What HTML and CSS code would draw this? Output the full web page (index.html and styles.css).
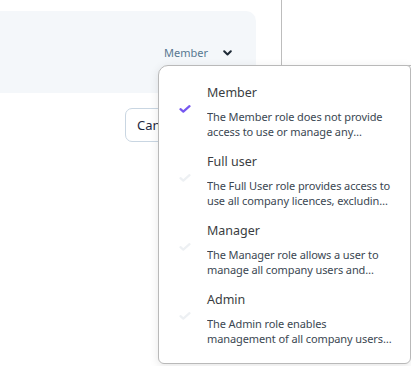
FILE: index.html
```html
<!DOCTYPE html>
<html>
<head>
<meta charset="utf-8">
<link rel="stylesheet" href="styles.css">
</head>
<body>
<div class="page">
  <div class="main">
    <div class="panel">
      <div class="role-select">
        <span class="role-value">Member</span>
        <svg class="chevron" width="9" height="6" viewBox="0 0 9 6"><path d="M1.2 1.2 L4.5 4.5 L7.8 1.2" fill="none" stroke="#1e2a36" stroke-width="2" stroke-linecap="round" stroke-linejoin="round"/></svg>
      </div>
    </div>
    <div class="actions">
      <button class="btn">Cancel</button>
      <button class="btn btn-primary">Save</button>
    </div>
  </div>
  <div class="side"></div>
</div>

<div class="menu">
  <div class="item">
    <svg class="check selected" width="12" height="8" viewBox="0 0 12 8"><path d="M1.5 4.2 L4.3 6.6 L10.5 1.2" fill="none" stroke="currentColor" stroke-width="2.2" stroke-linecap="round" stroke-linejoin="round"/></svg>
    <div class="item-body">
      <div class="item-title">Member</div>
      <div class="item-desc">The Member role does not provide access to use or manage any company licences or users.</div>
    </div>
  </div>
  <div class="item">
    <svg class="check" width="12" height="8" viewBox="0 0 12 8"><path d="M1.5 4.2 L4.3 6.6 L10.5 1.2" fill="none" stroke="currentColor" stroke-width="2.2" stroke-linecap="round" stroke-linejoin="round"/></svg>
    <div class="item-body">
      <div class="item-title">Full user</div>
      <div class="item-desc">The Full User role provides access to use all company licences, excluding administrative features.</div>
    </div>
  </div>
  <div class="item">
    <svg class="check" width="12" height="8" viewBox="0 0 12 8"><path d="M1.5 4.2 L4.3 6.6 L10.5 1.2" fill="none" stroke="currentColor" stroke-width="2.2" stroke-linecap="round" stroke-linejoin="round"/></svg>
    <div class="item-body">
      <div class="item-title">Manager</div>
      <div class="item-desc">The Manager role allows a user to manage all company users and licences.</div>
    </div>
  </div>
  <div class="item">
    <svg class="check" width="12" height="8" viewBox="0 0 12 8"><path d="M1.5 4.2 L4.3 6.6 L10.5 1.2" fill="none" stroke="currentColor" stroke-width="2.2" stroke-linecap="round" stroke-linejoin="round"/></svg>
    <div class="item-body">
      <div class="item-title">Admin</div>
      <div class="item-desc">The Admin role enables management of all company users, licences and settings.</div>
    </div>
  </div>
</div>
</body>
</html>
```

FILE: styles.css
```css
* { box-sizing: border-box; }
html, body {
  margin: 0;
  padding: 0;
  background: #ffffff;
  font-family: "Noto Sans", "Open Sans", sans-serif;
  overflow: hidden;
}
.page {
  display: flex;
  width: 411px;
  height: 366px;
}
.main {
  width: 281px;
  display: flex;
  flex-direction: column;
}
.panel {
  margin-top: 11px;
  width: 256px;
  height: 82px;
  background: #f4f7fa;
  border-radius: 0 10px 10px 0;
  display: flex;
  justify-content: flex-end;
  align-items: flex-start;
  padding: 34px 24px 0 0;
}
.role-select {
  display: flex;
  align-items: center;
  gap: 15px;
}
.role-value {
  font-size: 11px;
  line-height: 16px;
  color: #587891;
}
.chevron { display: block; }
.actions {
  display: flex;
  gap: 10px;
  margin-top: 15px;
  padding-left: 125px;
}
.btn {
  height: 34px;
  padding: 0 11px;
  font-family: "Noto Sans", sans-serif;
  font-size: 13px;
  color: #1d2740;
  background: #ffffff;
  border: 1px solid #c9d6e2;
  border-radius: 7px;
  flex-shrink: 0;
}
.btn-primary {
  background: #6b4ee6;
  color: #fff;
  border-color: #6b4ee6;
}
.side {
  width: 130px;
  height: 66px;
  border-left: 1px solid #bdbdbd;
  border-bottom: 1px solid #bdbdbd;
}
.menu {
  position: absolute;
  left: 158px;
  top: 65px;
  width: 253px;
  height: 299px;
  background: #ffffff;
  border: 1px solid #b9b9b9;
  border-radius: 10px 4px 6px 6px;
  box-shadow: 0 2px 10px rgba(0, 0, 0, 0.10);
  padding: 17px 14px 0 20px;
  display: flex;
  flex-direction: column;
  gap: 13px;
}
.item {
  display: flex;
  align-items: center;
  gap: 16px;
}
.check {
  flex-shrink: 0;
  width: 12px;
  height: 8px;
  color: #edf0f3;
  margin-top: -5px;
}
.check.selected { color: #7657f0; }
.item-body {
  width: 185px;
}
.item-title {
  font-size: 12.5px;
  line-height: 20px;
  color: #3a3d41;
  margin-bottom: 7px;
}
.item-desc {
  font-size: 11px;
  letter-spacing: -0.1px;
  line-height: 14.5px;
  color: #3b4752;
  display: -webkit-box;
  -webkit-line-clamp: 2;
  -webkit-box-orient: vertical;
  overflow: hidden;
}
```
